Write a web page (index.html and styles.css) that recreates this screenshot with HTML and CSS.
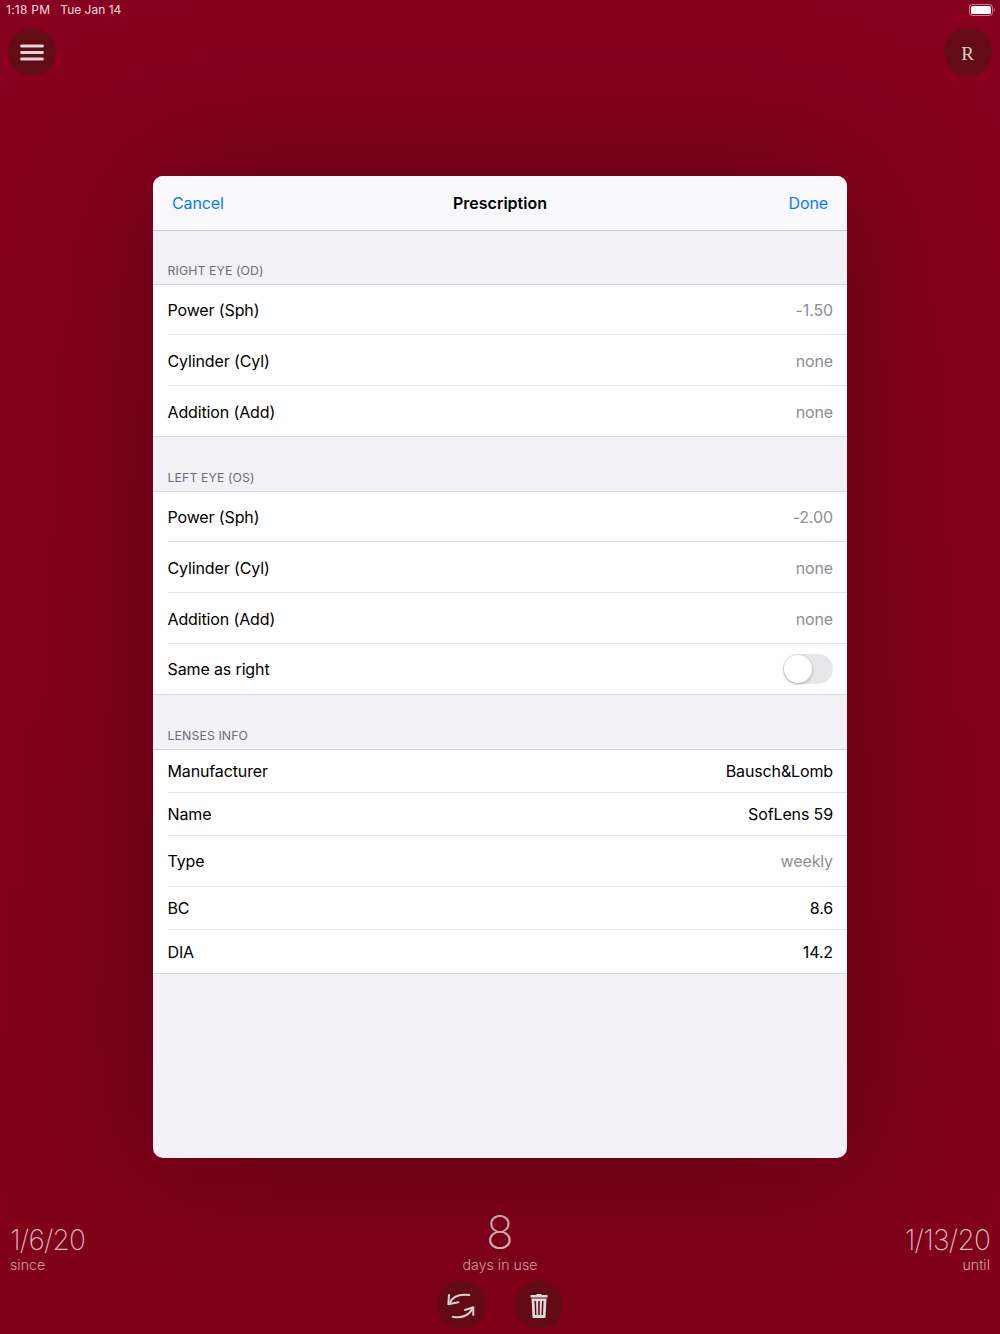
FILE: index.html
```html
<!DOCTYPE html>
<html>
<head>
<meta charset="utf-8">
<title>Prescription</title>
<link rel="stylesheet" href="styles.css">
</head>
<body>
<div class="page">
  <div class="status">
    <span class="time">1:18 PM</span>
    <span class="date">Tue Jan 14</span>
    <svg class="battery" width="26" height="12" viewBox="0 0 26 12">
      <rect x="0.5" y="0.5" width="23" height="11" rx="3" fill="none" stroke="#fff" stroke-opacity="0.5"/>
      <rect x="2" y="2" width="20" height="8" rx="1.5" fill="#fff"/>
      <path d="M25 4.2c.7.3 1 1 1 1.8s-.3 1.500-1 1.800z" fill="#fff" fill-opacity="0.5"/>
    </svg>
  </div>
  <div class="topbar">
    <div class="round">
      <svg width="24" height="17" viewBox="0 0 24 17">
        <path d="M1.500 2h21M1.500 8.500h21M1.500 15h21" stroke="#d8d8d8" stroke-width="2.800" stroke-linecap="round"/>
      </svg>
    </div>
    <div class="round initial">R</div>
  </div>
  <div class="bottom">
    <div class="stats">
      <div class="stat">
        <div class="big">1/6/20</div>
        <div class="small">since</div>
      </div>
      <div class="stat center">
        <div class="big huge">8</div>
        <div class="small">days in use</div>
      </div>
      <div class="stat right">
        <div class="big">1/13/20</div>
        <div class="small">until</div>
      </div>
    </div>
    <div class="actions">
      <div class="round">
        <svg width="30" height="28" viewBox="0 0 30 28" fill="none" stroke="#d8d0d0" stroke-width="2" stroke-linecap="round" stroke-linejoin="round">
          <path d="M3.300 12.300C6 6.500 12 2.500 23.300 4"/>
          <path d="M3 4L2.300 13.300L12.300 11.300"/>
          <path d="M26.700 17.300C24 23 17 28 6.700 25.700"/>
          <path d="M19 19L27.300 16.300L27.300 24"/>
        </svg>
      </div>
      <div class="round">
        <svg width="18" height="25" viewBox="0 0 18 25">
          <path d="M6.500 2V1h5v1h6v2.500H.5V2z" fill="#dcdcdc"/>
          <path fill-rule="evenodd" d="M1.500 5.500h15L15.500 24a1 1 0 0 1-1 1h-11a1 1 0 0 1-1-1zM4.500 8l.5 14h1.500L6 8zM8.200 8v14h1.600V8zM12 8l-.5 14H13l.5-14z" fill="#dcdcdc"/>
        </svg>
      </div>
    </div>
  </div>
</div>

<div class="modal">
  <div class="navbar">
    <span class="link">Cancel</span>
    <span class="title">Prescription</span>
    <span class="link done">Done</span>
  </div>

  <div class="section-head">RIGHT EYE (OD)</div>
  <div class="group">
    <div class="row"><span>Power (Sph)</span><span class="muted">-1.50</span></div>
    <div class="row low"><span>Cylinder (Cyl)</span><span class="muted">none</span></div>
    <div class="row low"><span>Addition (Add)</span><span class="muted">none</span></div>
  </div>

  <div class="section-head">LEFT EYE (OS)</div>
  <div class="group">
    <div class="row"><span>Power (Sph)</span><span class="muted">-2.00</span></div>
    <div class="row low"><span>Cylinder (Cyl)</span><span class="muted">none</span></div>
    <div class="row low"><span>Addition (Add)</span><span class="muted">none</span></div>
    <div class="row"><span>Same as right</span><span class="switch"><span class="knob"></span></span></div>
  </div>

  <div class="section-head">LENSES INFO</div>
  <div class="group">
    <div class="row short"><span>Manufacturer</span><span>Bausch&amp;Lomb</span></div>
    <div class="row short"><span>Name</span><span>SofLens 59</span></div>
    <div class="row"><span>Type</span><span class="muted">weekly</span></div>
    <div class="row short"><span>BC</span><span>8.6</span></div>
    <div class="row short"><span>DIA</span><span>14.2</span></div>
  </div>
</div>
</body>
</html>
```

FILE: styles.css
```css
* {
  box-sizing: border-box;
}
body {
  margin: 0;
  font-family: Inter, "Liberation Sans", sans-serif;
  background: #86001e;
}
.page {
  position: relative;
  display: flex;
  flex-direction: column;
  width: 1000px;
  height: 1334px;
  overflow: hidden;
  background: linear-gradient(#88001f, #80001a);
  color: #fff;
}
.page::after {
  content: "";
  position: absolute;
  left: 153px;
  top: 176px;
  width: 694px;
  height: 982px;
  box-shadow: 0 0 130px 10px rgba(40, 0, 0, 0.4);
}
.status {
  display: flex;
  align-items: center;
  height: 19px;
  padding: 0 5px 0 6px;
  font-size: 12px;
  color: #f3dfe3;
}
.time {
  letter-spacing: 0.25px;
}
.date {
  margin-left: 10px;
}
.battery {
  margin-left: auto;
}
.topbar {
  display: flex;
  justify-content: space-between;
  padding: 9px 8px 0;
}
.round {
  display: flex;
  align-items: center;
  justify-content: center;
  width: 48px;
  height: 48px;
  border-radius: 50%;
  background: #630c18;
}
.initial {
  padding: 3px 1px 0 0;
  font-family: "Liberation Serif", serif;
  font-size: 19px;
  color: #d8d0d0;
}
.bottom {
  margin-top: auto;
}
.stats {
  display: flex;
  justify-content: space-between;
  align-items: flex-end;
  padding: 0 10px;
}
.stat {
  width: 200px;
}
.center {
  text-align: center;
}
.right {
  text-align: right;
}
.big {
  margin-bottom: -2px;
  font-size: 28px;
  font-weight: 200;
  letter-spacing: -0.8px;
  line-height: 36px;
  color: #d6b8bf;
}
.huge {
  font-size: 46px;
  letter-spacing: 0;
  line-height: 52px;
}
.small {
  font-size: 14.200px;
  font-weight: 300;
  line-height: 18px;
  color: #d0a6b0;
}
.actions {
  display: flex;
  justify-content: center;
  gap: 30px;
  padding-top: 7px;
  margin-bottom: 5px;
}
.modal {
  position: absolute;
  left: 153px;
  top: 176px;
  width: 694px;
  height: 982px;
  border-radius: 10px;
  overflow: hidden;
  background: #f1f1f6;
  color: #000;
  font-size: 16px;
  letter-spacing: -0.13px;
}
.navbar {
  display: grid;
  grid-template-columns: 1fr auto 1fr;
  align-items: center;
  height: 55px;
  padding: 0 19px;
  background: #f9f9fb;
  border-bottom: 1px solid #c9c9cd;
}
.link {
  color: #0a7aff;
}
.done {
  text-align: right;
}
.title {
  font-weight: 600;
  letter-spacing: 0;
}
.section-head {
  display: flex;
  align-items: flex-end;
  height: 55px;
  padding: 0 0 6px 14.500px;
  font-size: 12.300px;
  letter-spacing: 0.1px;
  color: #6d6d72;
  border-bottom: 1px solid #d8d8dc;
}
.navbar + .section-head {
  height: 54px;
}
.group {
  background: #fff;
  border-bottom: 1px solid #d8d8dc;
}
.row {
  display: flex;
  justify-content: space-between;
  align-items: center;
  height: 51px;
  margin-left: 14.500px;
  padding-right: 14px;
  border-bottom: 1px solid #e2e2e5;
}
.row:first-child,
.row:last-child {
  height: 50px;
}
.row:last-child {
  border-bottom: 0;
}
.row.short {
  height: 43px;
}
.row.low {
  padding-top: 1px;
}
.muted {
  color: #8e8e93;
}
.switch {
  display: block;
  width: 50px;
  height: 30px;
  border-radius: 15px;
  background: #e7e7ea;
  padding: 1px;
}
.knob {
  display: block;
  width: 28px;
  height: 28px;
  border-radius: 50%;
  background: #fff;
  box-shadow: 0 1px 3px rgba(0, 0, 0, 0.3);
}
```
